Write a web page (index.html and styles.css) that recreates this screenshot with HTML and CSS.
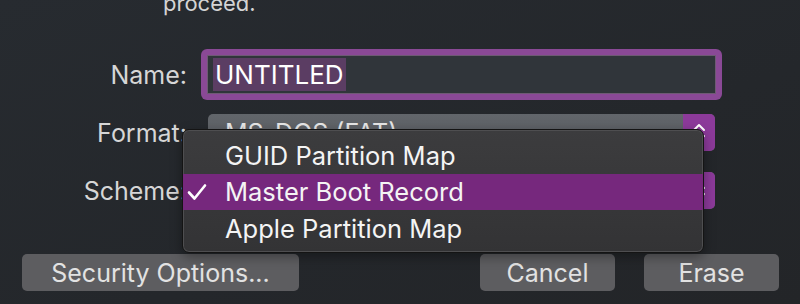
FILE: index.html
```html
<!DOCTYPE html>
<html lang="en">
<head>
    <meta charset="UTF-8">
    <title>Erase</title>
    <link rel="stylesheet" href="styles.css">
</head>
<body>
    <div class="sheet">
        <p class="message">proceed.</p>

        <div class="form">
            <label class="label">Name:</label>
            <div class="ring">
                <div class="field"><span class="selection">UNTITLED</span></div>
            </div>

            <label class="label">Format:</label>
            <div class="popup">
                <span class="popup-value">MS-DOS (FAT)</span>
                <span class="stepper">
                    <svg width="14" height="22" viewBox="0 0 14 22"><path d="M2 8 L7 3 L12 8 M2 14 L7 19 L12 14" fill="none" stroke="#fff" stroke-width="2" stroke-linecap="round" stroke-linejoin="round"/></svg>
                </span>
            </div>

            <label class="label">Scheme:</label>
            <div class="popup">
                <span class="popup-value">Master Boot Record</span>
                <span class="stepper">
                    <svg width="14" height="22" viewBox="0 0 14 22"><path d="M2 8 L7 3 L12 8 M2 14 L7 19 L12 14" fill="none" stroke="#fff" stroke-width="2" stroke-linecap="round" stroke-linejoin="round"/></svg>
                </span>
            </div>
        </div>

        <div class="buttons">
            <button class="btn btn-wide">Security Options...</button>
            <div class="spacer"></div>
            <button class="btn">Cancel</button>
            <button class="btn">Erase</button>
        </div>

        <div class="menu">
            <div class="menu-item"><span class="check"></span>GUID Partition Map</div>
            <div class="menu-item active">
                <span class="check">
                    <svg width="20" height="18" viewBox="0 0 20 18"><path d="M2 9.5 L7.5 15.5 L18 2.5" fill="none" stroke="#fff" stroke-width="2.6" stroke-linecap="round" stroke-linejoin="round"/></svg>
                </span>Master Boot Record
            </div>
            <div class="menu-item"><span class="check"></span>Apple Partition Map</div>
        </div>
    </div>
</body>
</html>
```

FILE: styles.css
```css
* {
    box-sizing: border-box;
}

body {
    margin: 0;
    padding: 0;
    width: 800px;
    height: 304px;
    overflow: hidden;
    background: linear-gradient(160deg, #272b30 0%, #24272b 60%, #232528 100%);
    font-family: 'Inter', 'Liberation Sans', sans-serif;
    color: #d8d8d8;
}

.sheet {
    position: relative;
    display: flow-root;
    height: 304px;
}

.message {
    margin: -12px 0 0 163px;
    height: 30px;
    font-size: 22px;
    line-height: 30px;
    color: #d4d4d4;
}

.form {
    display: grid;
    grid-template-columns: 187px 521px;
    grid-auto-rows: 51px;
    column-gap: 14px;
    row-gap: 7px;
    margin-top: 31px;
    align-items: center;
}

.label {
    text-align: right;
    font-size: 25px;
    color: #d6d6d6;
}

.ring {
    height: 51px;
    padding: 6px;
    border-radius: 6px;
    background: #8a4996;
}

.field {
    height: 39px;
    background: #30353a;
    border: 1px solid #6e5a74;
    padding: 2px 5px;
}

.selection {
    display: inline-block;
    height: 33px;
    line-height: 33px;
    padding: 0 2px;
    background: #5b3d63;
    color: #fff;
    font-size: 26px;
}

.popup {
    margin: 0 7px;
    height: 37px;
    display: flex;
    align-items: center;
    border-radius: 5px;
    overflow: hidden;
    background: linear-gradient(#62666b, #575a5f);
}

.popup-value {
    flex: 1;
    padding-left: 17px;
    font-size: 25px;
    color: #e6e6e6;
}

.stepper {
    width: 32px;
    height: 37px;
    display: flex;
    align-items: center;
    justify-content: center;
    background: #8c3a9a;
}

.buttons {
    display: flex;
    gap: 29px;
    margin: 38px 21px 0 22px;
}

.spacer {
    flex: 1;
}

.btn {
    width: 135px;
    height: 37px;
    border: none;
    border-radius: 5px;
    background: #5d5d60;
    color: #e2e2e2;
    font-family: 'Inter', 'Liberation Sans', sans-serif;
    font-size: 25px;
    padding: 0;
}

.btn-wide {
    width: 277px;
}

.menu {
    position: absolute;
    left: 182px;
    top: 129px;
    width: 522px;
    height: 124px;
    padding: 7px 0;
    border-radius: 7px;
    border: 1px solid #141414;
    box-shadow: inset 0 0 0 1px #4e4e50, 0 4px 12px rgba(0, 0, 0, 0.35);
    background: linear-gradient(#3c3c3e, #333335);
}

.menu-item {
    height: 36.5px;
    display: flex;
    align-items: center;
    font-size: 25.5px;
    color: #f4f4f4;
}

.menu-item.active {
    background: #76287d;
}

.check {
    width: 42px;
    display: flex;
    justify-content: flex-start;
    padding-left: 4px;
}
```
